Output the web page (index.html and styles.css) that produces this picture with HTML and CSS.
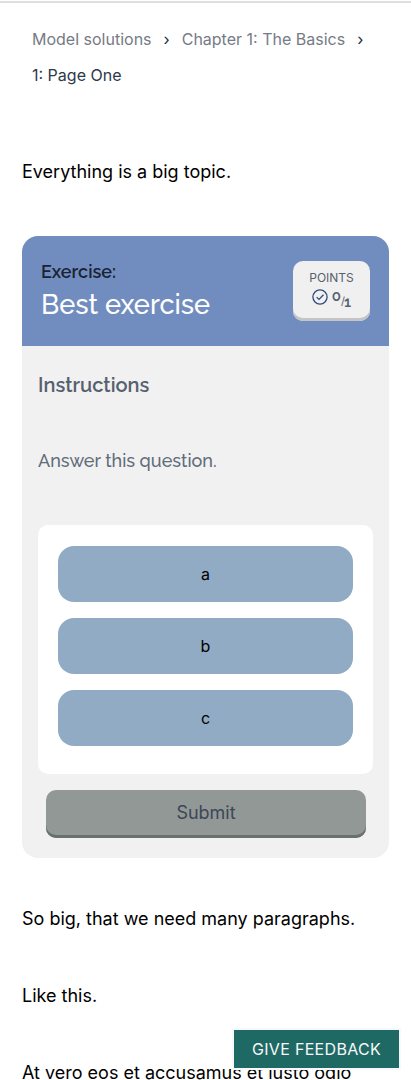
FILE: index.html
```html
<!DOCTYPE html>
<html lang="en">
<head>
<meta charset="utf-8">
<meta name="viewport" content="width=device-width, initial-scale=1">
<title>Page One</title>
<link rel="stylesheet" href="styles.css">
</head>
<body>
<nav class="breadcrumbs" aria-label="Breadcrumbs">
  <a class="crumb">Model solutions</a><span class="separator">›</span><a class="crumb">Chapter 1: The Basics</a><span class="separator">›</span>
  <span class="crumb current">1: Page One</span>
</nav>
<main class="content">
  <p class="paragraph">Everything is a big topic.</p>
  <section class="exercise">
    <header class="exercise-header">
      <h2 class="exercise-title"><span class="exercise-label">Exercise:</span><span class="exercise-name">Best exercise</span></h2>
      <div class="points">
        <span class="points-label">POINTS</span>
        <div class="points-row">
          <svg class="check" viewBox="0 0 16 16" fill="none" stroke="#304a7c" stroke-width="1.3"><circle cx="8" cy="8" r="7.1"/><path d="M4.6 8.1 7 10.4 11.5 5.7"/></svg>
          <span class="score"><span class="got">0</span><span class="slash">/</span><span class="max">1</span></span>
        </div>
      </div>
    </header>
    <div class="exercise-body">
      <h3 class="instructions">Instructions</h3>
      <p class="question">Answer this question.</p>
      <div class="options">
        <button class="option">a</button>
        <button class="option">b</button>
        <button class="option">c</button>
      </div>
      <button class="submit">Submit</button>
    </div>
  </section>
  <p class="paragraph">So big, that we need many paragraphs.</p>
  <p class="paragraph">Like this.</p>
  <p class="paragraph">At vero eos et accusamus et iusto odio</p>
</main>
<button class="feedback">GIVE FEEDBACK</button>
</body>
</html>
```
FILE: styles.css
```css
* { box-sizing: border-box; }
body {
  margin: 0;
  height: 1080px;
  overflow: hidden;
  border-top: 1px solid #fff;
  background: #fff;
  color: #000;
  font-family: Inter, "Liberation Sans", sans-serif;
}
button { border: 0; font-family: inherit; padding: 0; }
.breadcrumbs {
  border-top: 2px solid #dde0df;
  padding: 18px 32px 0;
  font-size: 16px;
  line-height: 36px;
  color: #202c3d;
}
.crumb { color: #767b85; }
.current { display: block; color: #2d384b; }
.separator { margin: 0 12px; }
.content { padding: 65px 22px 0; }
.paragraph { margin: 0 0 48px; font-size: 18px; line-height: 28.8px; white-space: nowrap; }
.exercise { margin: 0 0 47px; border-radius: 16px; overflow: hidden; background: #f1f1f1; }
.content > .paragraph:first-child { margin-bottom: 49.2px; }
.exercise-header {
  display: flex;
  align-items: center;
  justify-content: space-between;
  height: 110px;
  padding: 0 19px;
  background: #718dbf;
}
.exercise-title, .instructions, .question { font-family: Raleway, Lato, sans-serif; }
.exercise-title { display: flex; flex-direction: column; margin: -1px 0 0; font-weight: 500; }
.exercise-label { font-size: 18px; line-height: 27px; font-weight: 600; color: #1a2333; }
.exercise-name { font-size: 27.2px; line-height: 38px; color: #fff; }
.points {
  display: flex;
  flex-direction: column;
  align-items: center;
  width: 77px;
  height: 60px;
  padding-top: 9px;
  border-radius: 10px;
  background: #f0f0f0;
  box-shadow: inset 0 -3px #c4c4c4;
  color: #57606f;
}
.points-label { font-size: 12px; line-height: 16px; }
.points-row { display: flex; gap: 4px; align-items: flex-start; }
.check { width: 16px; height: 16px; margin-top: 3px; }
.score { display: flex; font-family: Raleway, Lato, sans-serif; font-size: 15px; line-height: 20px; font-weight: 600; }
.slash { width: 3px; margin: 5px 0 0; font: 400 11px/20px Inter, sans-serif; }
.max { margin-top: 6px; }
.exercise-body { padding: 24px 16px 20px; }
.instructions { margin: 0 0 47px; font-size: 20px; line-height: 30px; font-weight: 600; color: #57606f; }
.question { margin: 0 0 50px; font-size: 18px; line-height: 28px; font-weight: 500; color: #626c7a; }
.options { display: flex; flex-direction: column; gap: 16px; padding: 21px 20px 28px; border-radius: 10px; background: #fff; }
.option { height: 56px; border-radius: 16px; background: #91abc5; color: #000; font-size: 16px; }
.submit {
  display: block;
  width: 320px;
  height: 48px;
  margin: 16px 0 0 8px;
  padding-bottom: 3px;
  border-radius: 10px;
  background: #929896;
  box-shadow: inset 0 -3px #68716e;
  color: #3d4656;
  font-size: 18px;
}
.feedback {
  position: fixed;
  right: 10px;
  bottom: 10px;
  width: 169px;
  height: 42px;
  border: 2px solid #f7f8f9;
  background: #1f6964;
  color: #f7f8f9;
  font-size: 16px;
  letter-spacing: .32px;
}
```
